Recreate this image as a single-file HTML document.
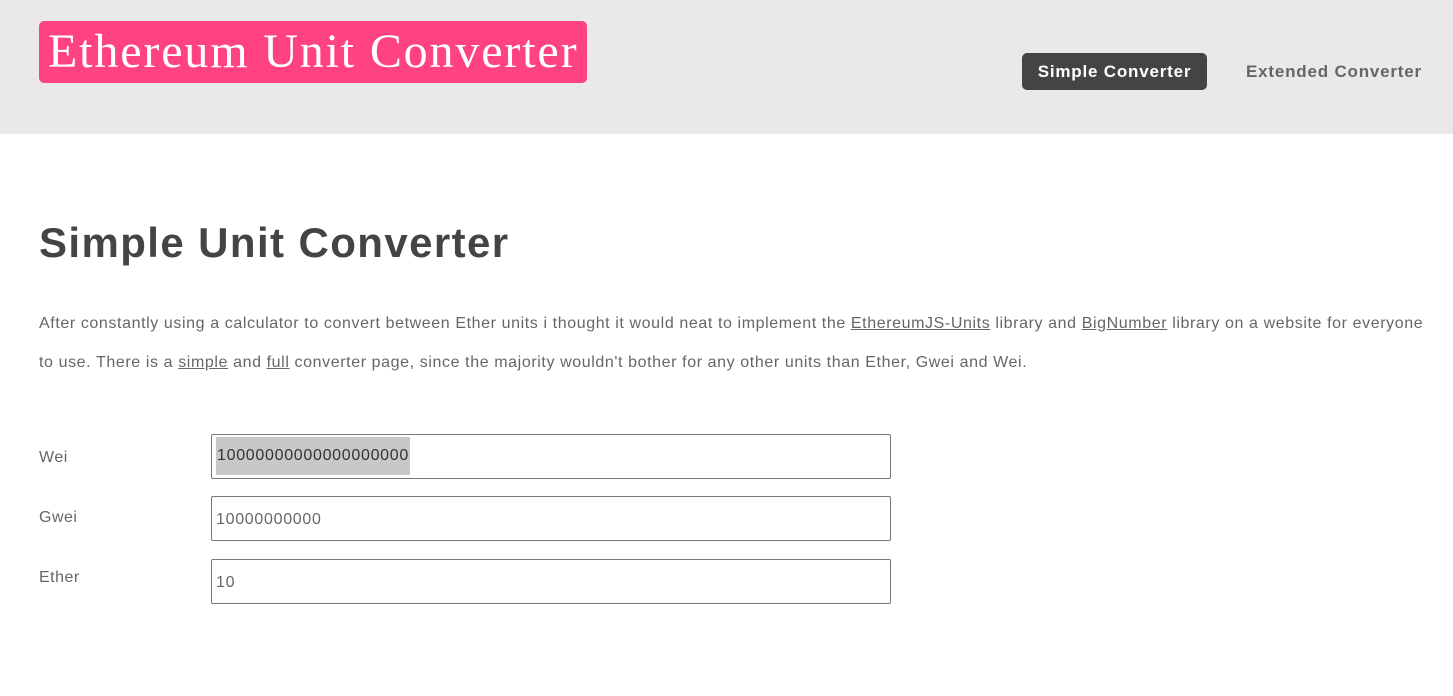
<!DOCTYPE html>
<html><head><style>
body{margin:0;width:1453px;height:696px;background:#fff;font-family:"Liberation Sans",Arial,sans-serif;overflow:hidden;position:relative}
.hdr{position:absolute;left:0;top:0;width:1453px;height:134px;background:#e9e9e9}
.logo{position:absolute;left:39px;top:21px;width:548px;height:62px;background:#ff4380;border-radius:5px;color:#fff;font-family:"Liberation Serif",serif;font-size:48px;line-height:62px;letter-spacing:1.85px;box-sizing:border-box;padding-left:9px;white-space:nowrap}
.nav1{position:absolute;left:1022px;top:53px;width:185px;height:37px;background:#444;border-radius:5px;color:#fff;font-weight:bold;font-size:17px;letter-spacing:0.8px;line-height:38px;text-align:center}
.nav2{position:absolute;left:1246px;top:53px;color:#666;font-weight:bold;font-size:17px;letter-spacing:0.8px;line-height:38px}
h1{position:absolute;left:39px;top:219px;margin:0;font-size:42px;color:#444;font-weight:bold;letter-spacing:1.4px;line-height:48px}
p{position:absolute;left:39px;top:304px;width:1395px;margin:0;font-size:16px;color:#666;line-height:39px;letter-spacing:0.6px}
a{color:#666;text-decoration:underline}
.lbl{position:absolute;left:39px;font-size:16px;color:#666;letter-spacing:0.5px}
.in{position:absolute;left:211px;width:680px;height:45px;border:1px solid #777;box-sizing:border-box;border-radius:2px;font-size:16px;color:#666;padding-left:4px;line-height:45px;letter-spacing:0.7px}
.sel{background:#c8c8c8;color:#333;padding:0 1px;display:inline-block;line-height:38px;margin-top:2px;vertical-align:top}
</style></head><body>
<div class="hdr"></div>
<div class="logo">Ethereum Unit Converter</div>
<div class="nav1">Simple Converter</div>
<div class="nav2">Extended Converter</div>
<h1>Simple Unit Converter</h1>
<p>After constantly using a calculator to convert between Ether units i thought it would neat to implement the <a>EthereumJS-Units</a> library and <a>BigNumber</a> library on a website for everyone<br>to use. There is a <a>simple</a> and <a>full</a> converter page, since the majority wouldn't bother for any other units than Ether, Gwei and Wei.</p>
<div class="lbl" style="top:449px">Wei</div>
<div class="in" style="top:434px"><span class="sel">10000000000000000000</span></div>
<div class="lbl" style="top:509px">Gwei</div>
<div class="in" style="top:496px">10000000000</div>
<div class="lbl" style="top:569px">Ether</div>
<div class="in" style="top:559px">10</div>
</body></html>
